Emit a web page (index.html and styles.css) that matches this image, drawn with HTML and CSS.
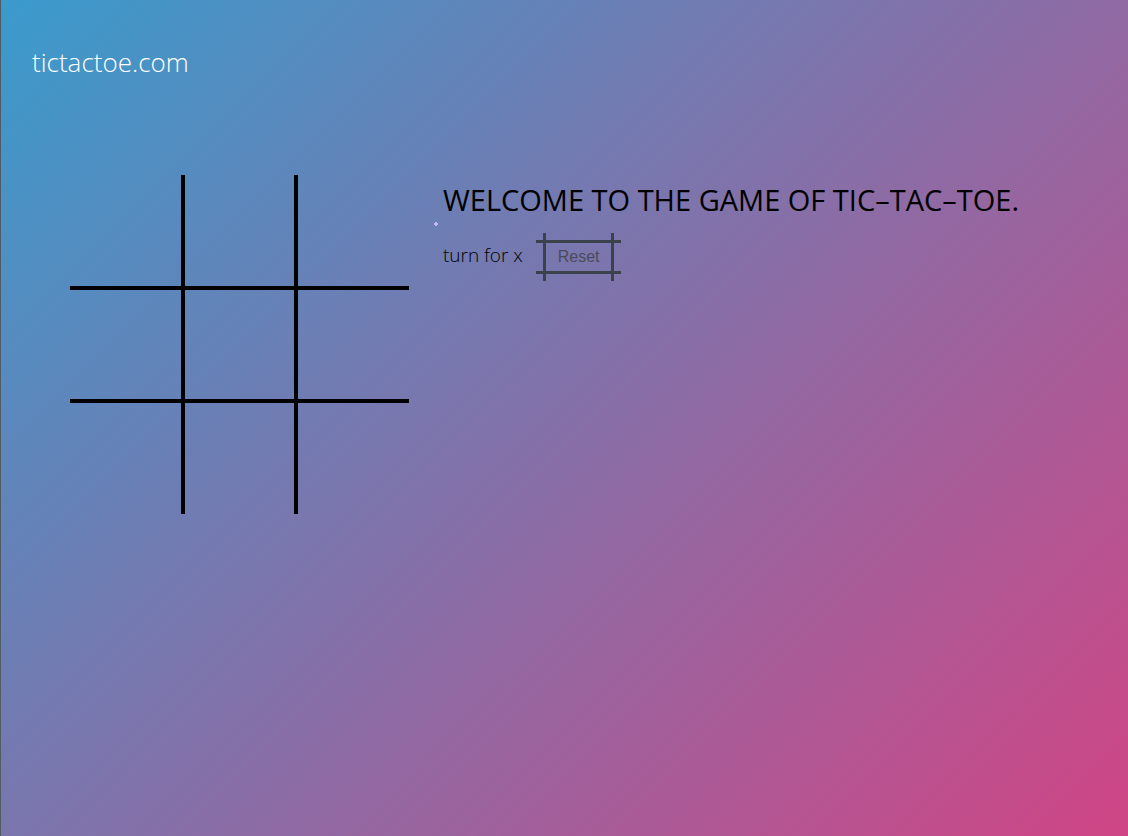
FILE: index.html
```html
<!DOCTYPE html>
<html lang="en">
<head>
<meta charset="utf-8">
<meta name="viewport" content="width=device-width, initial-scale=1">
<title>tictactoe.com</title>
<link rel="stylesheet" href="styles.css">
</head>
<body class="page">
<header class="header"><a class="brand" href="#">tictactoe.com</a></header>
<main class="game">
<div class="board">
<button class="cell" type="button" aria-label="Row 1, column 1"></button>
<button class="cell" type="button" aria-label="Row 1, column 2"></button>
<button class="cell" type="button" aria-label="Row 1, column 3"></button>
<button class="cell" type="button" aria-label="Row 2, column 1"></button>
<button class="cell" type="button" aria-label="Row 2, column 2"></button>
<button class="cell" type="button" aria-label="Row 2, column 3"></button>
<button class="cell" type="button" aria-label="Row 3, column 1"></button>
<button class="cell" type="button" aria-label="Row 3, column 2"></button>
<button class="cell" type="button" aria-label="Row 3, column 3"></button>
</div>
<section class="info">
<h1 class="title">WELCOME TO THE GAME OF TIC–TAC–TOE.</h1>
<svg class="spark" viewBox="0 0 4 4" aria-hidden="true"><path d="M1 0h2v1h1v2H3v1H1V3H0V1h1z"/></svg>
<div class="status">
<span class="turn">turn for x</span>
<button class="reset" type="button">Reset</button>
</div>
</section>
</main>
</body>
</html>
```
FILE: styles.css
```css
* { box-sizing: border-box; }

.page {
  min-height: 100vh;
  margin: 0;
  border-left: 1px solid #505b66;
  background: linear-gradient(135deg, #3a9bcc, #d04585);
  color: #000;
  font-family: "Open Sans", "Noto Sans", sans-serif;
}

.header { padding: 46px 31px 48px; }

.brand {
  display: block;
  color: #fff;
  font-size: 26px;
  font-weight: 300;
  line-height: 32px;
  text-decoration: none;
}

.game {
  display: flex;
  align-items: flex-start;
  gap: 34px;
  padding: 49px 69px;
}

.board {
  display: grid;
  flex: none;
  grid-template-columns: repeat(3, 113px);
  grid-auto-rows: 113px;
}

.cell {
  padding: 0;
  border: 2px solid #000;
  background: none;
}

.cell:nth-child(3n + 1) { border-left: 0; }
.cell:nth-child(3n) { border-right: 0; }
.cell:nth-child(-n + 3) { border-top: 0; }
.cell:nth-child(n + 7) { border-bottom: 0; }

.info {
  position: relative;
  flex: 1;
  padding-top: 4px;
}

.title {
  margin: 0;
  font-size: 29px;
  font-weight: 400;
  line-height: 42px;
  white-space: nowrap;
}

.spark {
  position: absolute;
  top: 47px;
  left: -9px;
  width: 4px;
  height: 4px;
  fill: #c0b5f4;
}

.status {
  display: flex;
  align-items: flex-start;
  gap: 13px;
  margin-top: 12px;
}

.turn {
  padding-top: 10px;
  font-size: 19px;
  font-weight: 300;
  line-height: 24px;
}

/* Four crossing bars form the button frame */
.reset {
  padding: 12px 21px 12px 22px;
  border: 0;
  background:
    linear-gradient(#3c424b, #3c424b) 7px 0 / 3px 100%,
    linear-gradient(#3c424b, #3c424b) right 7px top 0 / 3px 100%,
    linear-gradient(#3c424b, #3c424b) 0 7px / 100% 3px,
    linear-gradient(#3c424b, #3c424b) left 0 bottom 7px / 100% 3px;
  background-repeat: no-repeat;
  color: #494b5b;
  font-family: "Liberation Sans", Arial, sans-serif;
  font-size: 16px;
  line-height: 24px;
}
```
